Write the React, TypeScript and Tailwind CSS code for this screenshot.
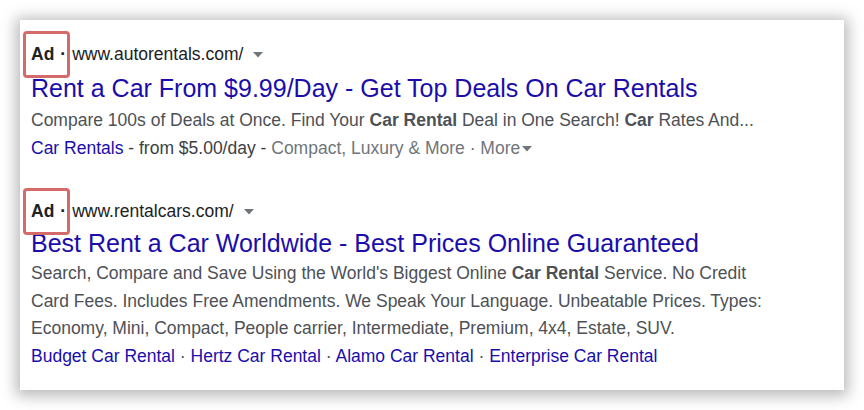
import React from "react";

const Caret = ({ className = "" }: { className?: string }) => (
  <svg width="10" height="6" viewBox="0 0 10 6" className={className}>
    <path d="M0 0 L10 0 L5 5.5 Z" fill="#70757a" />
  </svg>
);

function AdLine({ url }: { url: string }) {
  return (
    <div className="flex items-center h-[40px] text-[17.5px] text-[#202124]">
      <span className="relative font-bold">
        Ad
        <span className="absolute left-[-8px] right-[-16px] top-[-10px] bottom-[-11px] rounded-[4px] border-[3px] border-[#d46a6a]" />
      </span>
      <span className="ml-[6px] mr-[6px] font-bold">·</span>
      <span>{url}</span>
      <Caret className="ml-[10px] mt-[2px]" />
    </div>
  );
}

export default function App() {
  return (
    <div
      className="w-[864px] h-[410px] bg-white p-[20px]"
      style={{ fontFamily: '"Liberation Sans", Arial, sans-serif' }}
    >
      <div className="w-[824px] h-[370px] bg-white shadow-[0_2px_14px_4px_rgba(0,0,0,0.28)] pl-[11px] pt-[14px]">
        <AdLine url="www.autorentals.com/" />
        <div className="text-[25px] leading-[30px] text-[#1a0dab] mt-[-1px]">
          Rent a Car From $9.99/Day - Get Top Deals On Car Rentals
        </div>
        <div className="text-[17.5px] leading-[27.5px] text-[#4d5156] mt-[4px]">
          Compare 100s of Deals at Once. Find Your <b>Car Rental</b> Deal in One Search! <b>Car</b> Rates And...
        </div>
        <div className="flex items-center text-[17.5px] leading-[27.5px] text-[#4d5156]">
          <span className="text-[#1a0dab]">Car Rentals</span>
          <span className="text-[#3c4043]">&nbsp;- from $5.00/day -&nbsp;</span>
          <span className="text-[#70757a]">Compact, Luxury &amp; More · More</span>
          <Caret className="ml-[2px] mt-[1px]" />
        </div>

        <div className="mt-[29px]">
          <AdLine url="www.rentalcars.com/" />
        </div>
        <div className="text-[25px] leading-[30px] text-[#1a0dab] mt-[-3px]">
          Best Rent a Car Worldwide - Best Prices Online Guaranteed
        </div>
        <div className="text-[17.5px] leading-[27.5px] text-[#4d5156] mt-[2px]">
          <div>
            Search, Compare and Save Using the World's Biggest Online <b>Car Rental</b> Service. No Credit
          </div>
          <div>Card Fees. Includes Free Amendments. We Speak Your Language. Unbeatable Prices. Types:</div>
          <div>Economy, Mini, Compact, People carrier, Intermediate, Premium, 4x4, Estate, SUV.</div>
        </div>
        <div className="text-[17.5px] leading-[27.5px] text-[#1a0dab]">
          Budget Car Rental <span className="text-[#4d5156]">·</span> Hertz Car Rental{" "}
          <span className="text-[#4d5156]">·</span> Alamo Car Rental{" "}
          <span className="text-[#4d5156]">·</span> Enterprise Car Rental
        </div>
      </div>
    </div>
  );
}
